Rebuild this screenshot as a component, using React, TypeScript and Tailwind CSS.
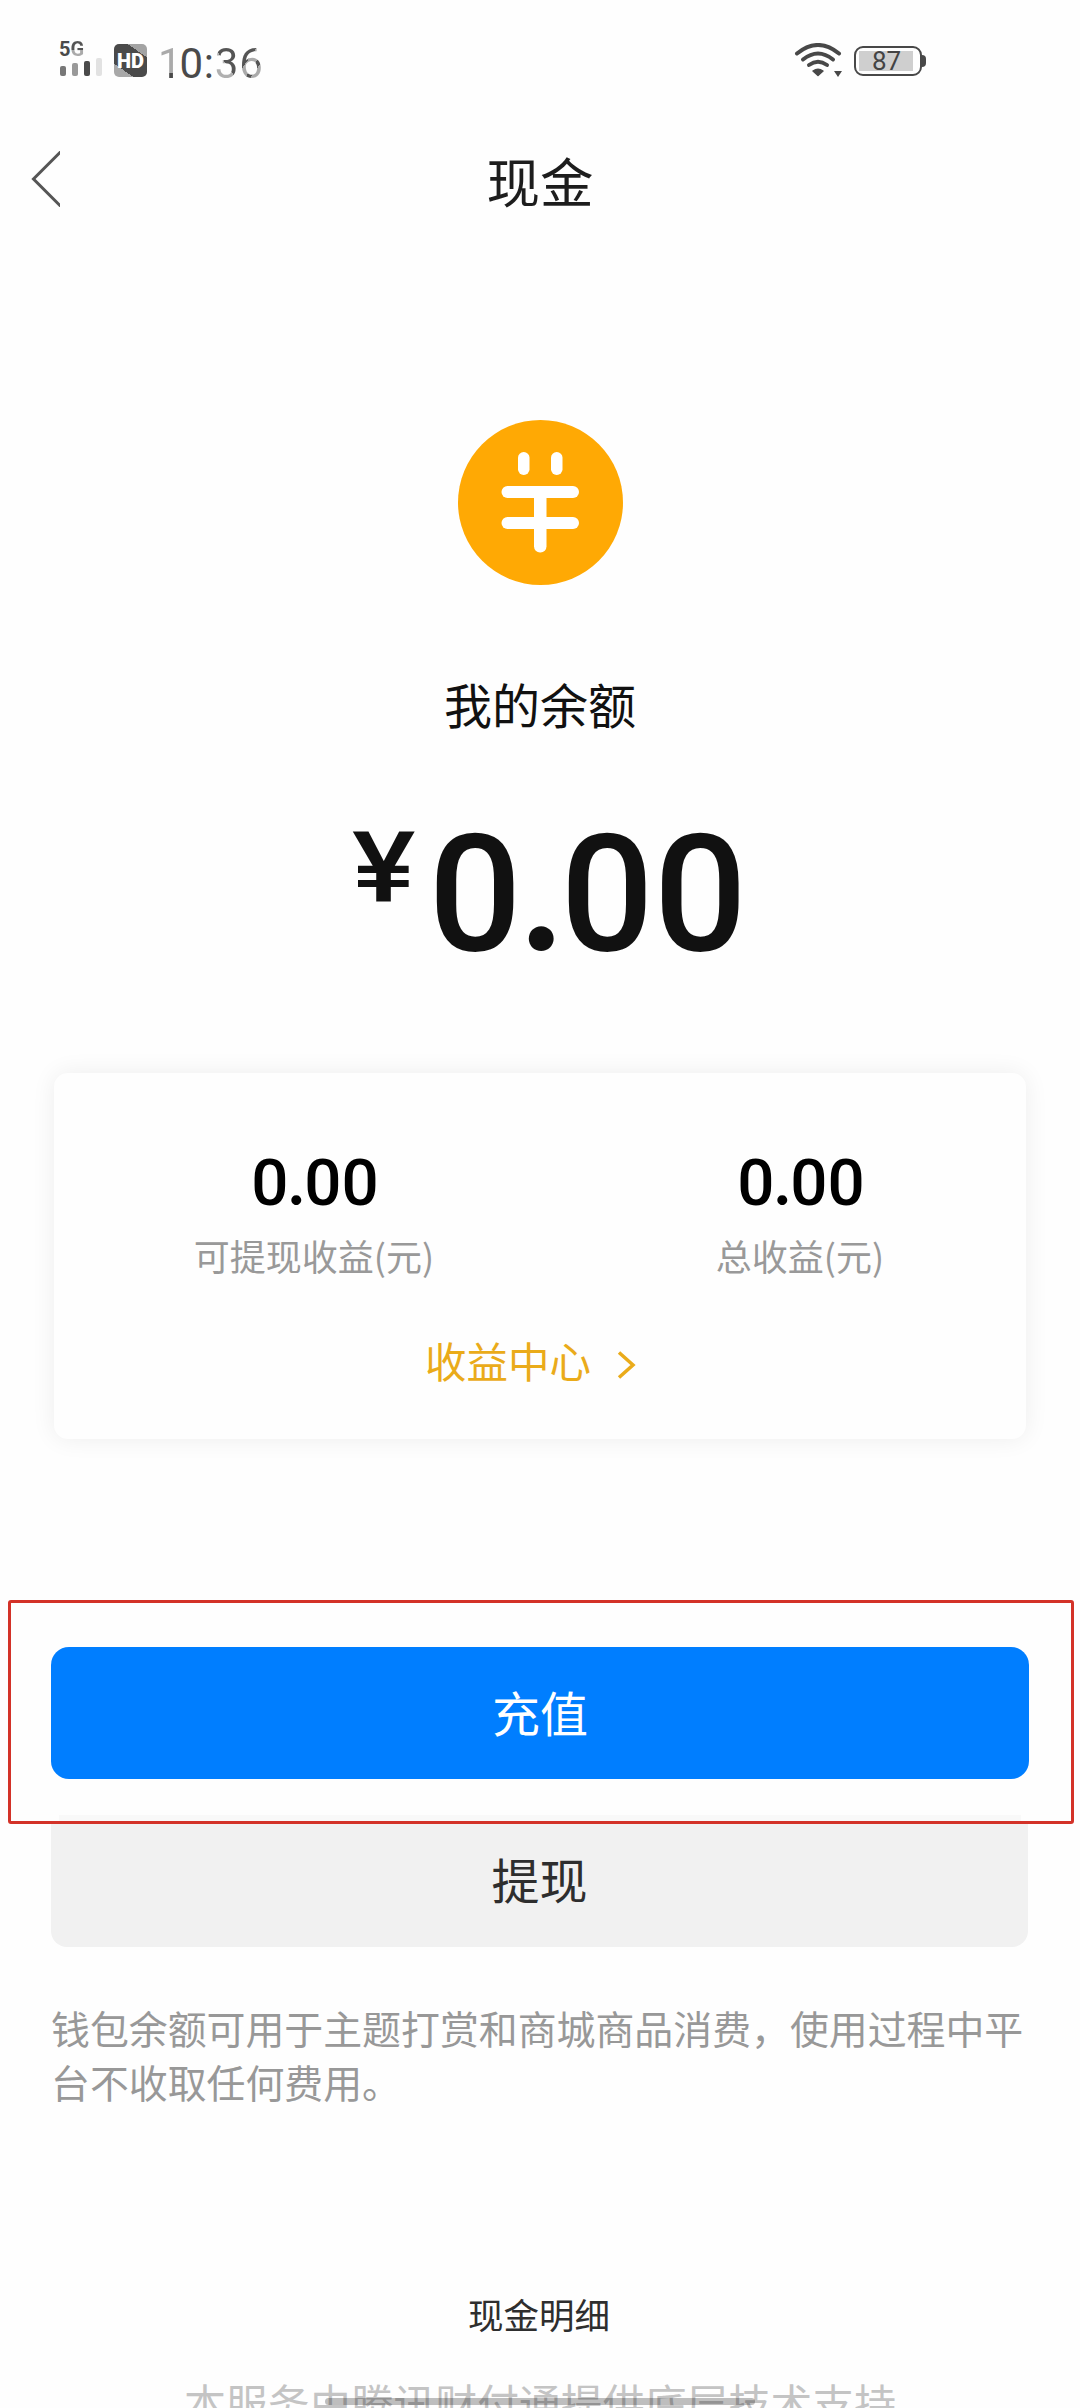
import React from "react";

const cjk = "font-['Noto_Sans_CJK_SC',sans-serif]";

const earnings = [
  { value: "0.00", label: "可提现收益(元)" },
  { value: "0.00", label: "总收益(元)" },
];

function Amount({ value, dotClass }: { value: string; dotClass: string }) {
  const [whole, cents] = value.split(".");
  return (
    <>
      {whole}
      <span className={dotClass}>.</span>
      {cents}
    </>
  );
}

function StatusBar() {
  return (
    <div className="flex h-[120px] shrink-0 items-start pl-[59px] pt-[40px]">
      {/* signal */}
      <div className="w-[44px] pt-px">
        <div className="flex h-[17px] font-['Roboto',sans-serif] text-[20px] font-bold leading-[17px]">
          <span className="text-[#4a4a4a]">5</span>
          <span className="bg-linear-to-b from-[#555] from-55% to-[#aaa] to-55% bg-clip-text text-transparent">G</span>
        </div>
        <svg width="44" height="19" viewBox="0 0 44 19">
          <rect x="1" y="8" width="6" height="10" rx="2" fill="#777" />
          <rect x="13" y="5" width="6" height="13" rx="2" fill="#999" />
          <rect x="25" y="3" width="6" height="15" rx="2" fill="#4a4a4a" />
          <rect x="37" y="0" width="6" height="18" rx="2" fill="#e2e2e2" />
        </svg>
      </div>

      {/* HD badge */}
      <div className="ml-[11px] mt-[4px] flex h-[33px] w-[33px] items-center justify-center rounded-[5px] bg-[linear-gradient(215deg,#a3a3a3_24%,#4a4a4a_24%,#4a4a4a_76%,#a8a8a8_76%)] font-['Roboto',sans-serif] text-[20px] font-black leading-none text-white">
        HD
      </div>

      {/* clock */}
      <div className="ml-[11px] mt-[4px] flex font-['Roboto',sans-serif] text-[42px] leading-[40px] tracking-[0.800px]">
        <span className="bg-linear-to-b from-[#aaa] from-73% to-[#4a4a4a] to-73% bg-clip-text text-transparent">1</span>
        <span className="-ml-[3px] text-[#4a4a4a]">0</span>
        <span className="text-[#4a4a4a]">:</span>
        <span className="bg-[linear-gradient(55deg,#b0b0b0_48%,#555_48%)] bg-clip-text text-transparent">3</span>
        <span className="bg-[linear-gradient(125deg,#555_38%,#aaa_38%,#aaa_56%,#555_56%,#555_66%,#aaa_66%)] bg-clip-text text-transparent">6</span>
      </div>

      {/* wifi */}
      <svg className="ml-auto mt-[3px]" width="48" height="36" viewBox="0 0 48 36" fill="none" stroke="#484848" strokeWidth="4" strokeLinecap="round">
        <path d="M3 10.500 Q24 -6.500 45 10.500" />
        <path d="M9 16.500 Q24 4.500 39 16.500" />
        <path d="M15 22 Q24 15.500 33 22" />
        <path d="M19 28 Q24 24.500 29 28 L24 32.500 Z" fill="#484848" strokeWidth="1.500" strokeLinejoin="round" />
        <path d="M40 28 h8 l-4 6 z" fill="#484848" stroke="none" />
      </svg>

      {/* battery */}
      <div className="ml-[12px] mr-[154px] mt-[6px] flex items-center">
        <div className="flex h-[30px] w-[68px] items-center rounded-[9px] border-2 border-[#484848] px-[3px]">
          <div className="flex h-[20px] w-[54px] items-center justify-center bg-[#cfcfcf] pl-px font-['Roboto',sans-serif] text-[26px] leading-[20px] text-[#444]">
            87
          </div>
        </div>
        <div className="h-[12px] w-[4px] rounded-r-[4px] bg-[#484848]" />
      </div>
    </div>
  );
}

export default function App() {
  return (
    <main className={`flex h-[2408px] w-[1080px] flex-col overflow-hidden bg-[#fefefe] ${cjk}`}>
      <StatusBar />

      <header className="grid h-[118px] shrink-0 grid-cols-[60px_1fr_60px] items-center">
        <svg width="60" height="56" viewBox="0 0 60 56" fill="none" stroke="#555" strokeWidth="3">
          <path d="M61.500 0 L33.500 28 L61.500 56" />
        </svg>
        <h1 className="pt-px text-center text-[53.500px] leading-[60px] text-[#1d1d1d]">现金</h1>
      </header>

      <section className="mt-[182px] flex shrink-0 flex-col items-center">
        <svg width="165" height="165" viewBox="0 0 165 165">
          <circle cx="82.500" cy="82.500" r="82.500" fill="#ffa904" />
          <g fill="#fff">
            <rect x="60" y="32" width="11.500" height="23" rx="5.700" />
            <rect x="93" y="32" width="11.500" height="23" rx="5.700" />
            <rect x="43.500" y="66" width="77.500" height="12" rx="6" />
            <rect x="43.500" y="97" width="77.500" height="12" rx="6" />
            <rect x="76" y="68" width="12.500" height="64.500" rx="6" />
          </g>
        </svg>

        <h2 className="mt-[88px] text-[48px] leading-[60px] text-[#111]">我的余额</h2>

        <div className="mt-[94px] flex h-[128px] w-[402px] items-start justify-between font-['Roboto',sans-serif] font-medium text-[#111]">
          <span className="ml-[13px] mt-[8px] origin-left scale-x-[1.22] text-[98px] leading-[66px]">¥</span>
          <span className="-mr-[6px] text-[164px] leading-[120px]">
            <Amount value="0.00" dotClass="font-['Lato',sans-serif] font-bold" />
          </span>
        </div>
      </section>

      <section className="mx-[54px] mt-[118px] flex h-[366px] shrink-0 flex-col rounded-[14px] bg-[#fefefe] pt-[77px] shadow-[0_0_24px_rgba(0,0,0,0.07)]">
        <div className="-mr-[17px] ml-[17px] grid grid-cols-2">
          {earnings.map((item) => (
            <div key={item.label} className="flex flex-col items-center">
              <span className="pl-[2px] font-['Roboto',sans-serif] text-[65.500px] font-medium leading-[60px] text-black">
                <Amount value={item.value} dotClass="font-['Lato',sans-serif] font-bold" />
              </span>
              <span className="mt-[22px] text-[36px] leading-[40px] text-[#999]">{item.label}</span>
            </div>
          ))}
        </div>
        <a className="mt-[61px] flex items-center pl-[371px] text-[41.500px] leading-[48px] text-[#eaab1a]">
          收益中心
          <svg className="ml-[26px] mt-[9px]" width="20" height="28" viewBox="0 0 20 28" fill="none" stroke="#eaab1a" strokeWidth="3.500">
            <path d="M2 1.500 L16 14 L2 26.500" />
          </svg>
        </a>
      </section>

      {/* highlighted recharge area */}
      <section className="ml-[8px] mt-[161px] flex h-[224px] w-[1066px] shrink-0 flex-col justify-between rounded-[3px] border-[3px] border-[#d33228] pl-[40px] pr-[42px] pt-[44px]">
        <button className="h-[132px] rounded-[18px] bg-[#007eff] pb-[4px] text-[48px] leading-[60px] text-white">充值</button>
        <div className="mx-[8px] h-[6px] bg-[#f9f9f9]" />
      </section>
      <button className="ml-[51px] mr-[52px] h-[123px] shrink-0 rounded-b-[16px] bg-[#f1f1f1] pb-[16px] text-[48px] leading-[60px] text-[#2e2e2e]">
        提现
      </button>

      <p className="ml-[51px] mt-[53px] w-[980px] shrink-0 text-[38.900px] leading-[54px] text-[#989898]">
        钱包余额可用于主题打赏和商城商品消费，使用过程中平台不收取任何费用。
      </p>

      <footer className="mt-[179px] flex shrink-0 flex-col items-center">
        <a className="-ml-[2px] text-[35.500px] leading-[54px] text-[#2e2e2e]">现金明细</a>
        <p className="mt-[31px] whitespace-nowrap text-[41.900px] leading-[60px] text-[#c4c4c4]">
          本服务由腾讯财付通提供底层技术支持
        </p>
      </footer>

      {/* system gesture bar */}
      <div className="fixed left-[325px] top-[2398px] h-[7px] w-[430px] rounded-full bg-black/25" />
    </main>
  );
}
